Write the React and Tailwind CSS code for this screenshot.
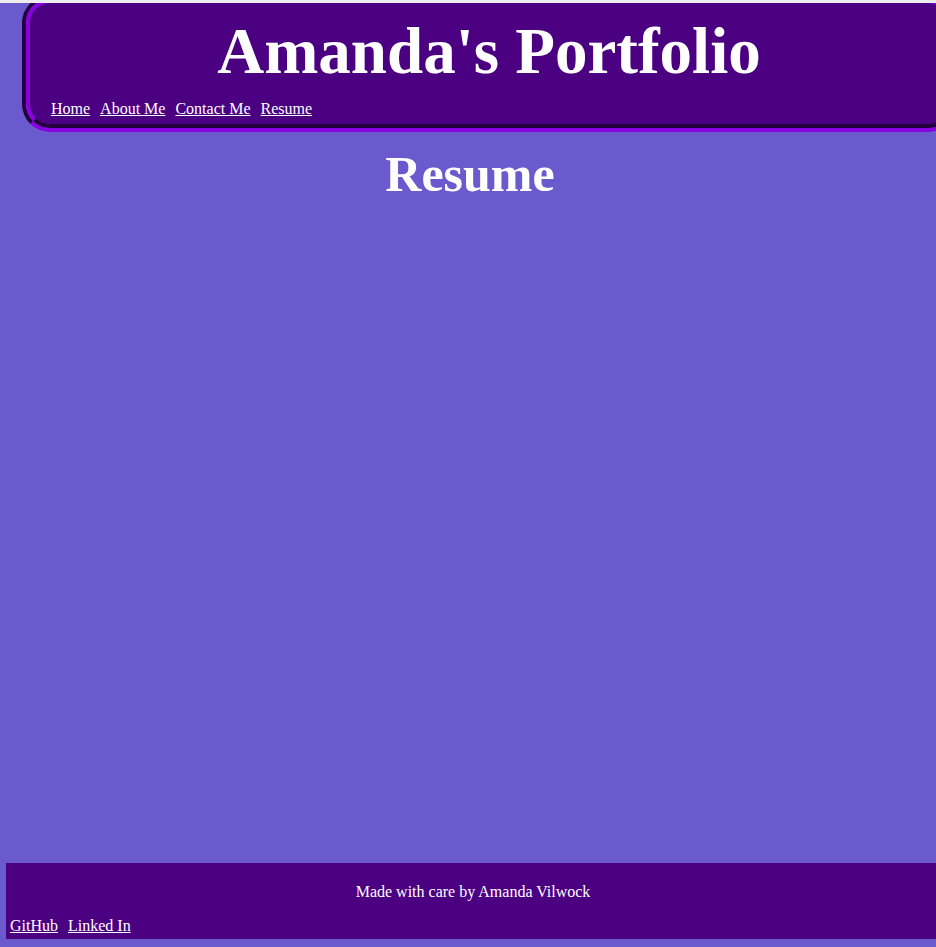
export default function App() {
  const serif = { fontFamily: '"Liberation Serif", "Times New Roman", serif' };
  return (
    <div className="min-h-[947px] w-[936px] overflow-hidden bg-[#6a5acd] text-white" style={serif}>
      <div className="h-[3px] bg-[#ececec]" />
      <div className="overflow-hidden">
        <header className="-mt-[8px] ml-[22px] w-[934px] rounded-[28px] border-[4px] border-t-[#250040] border-l-[#250040] border-r-[#8a00e0] border-b-[#8a00e0]">
          <div className="rounded-[24px] border-[4px] border-t-[#8a00e0] border-l-[#8a00e0] border-r-[#250040] border-b-[#250040] bg-[#4b0082]">
            <h1 className="pt-[12px] text-center text-[65px] font-bold leading-[72px]">Amanda's Portfolio</h1>
            <nav className="mt-[13px] flex gap-[10px] pb-[6px] pl-[21px] text-[16px] leading-[18px]">
              <a href="#" className="underline">Home</a>
              <a href="#" className="underline">About Me</a>
              <a href="#" className="underline">Contact Me</a>
              <a href="#" className="underline">Resume</a>
            </nav>
          </div>
        </header>
      </div>
      <main className="h-[731px] pl-[4px]">
        <h2 className="pt-[14px] text-center text-[50px] font-bold leading-[56px]">Resume</h2>
      </main>
      <footer className="ml-[6px] h-[76px] w-[934px] bg-[#4b0082] text-[16px]">
        <p className="pt-[20px] text-center leading-[18px]">Made with care by Amanda Vilwock</p>
        <div className="mt-[16px] flex gap-[10px] pl-[4px] leading-[18px]">
          <a href="#" className="underline">GitHub</a>
          <a href="#" className="underline">Linked In</a>
        </div>
      </footer>
    </div>
  );
}
